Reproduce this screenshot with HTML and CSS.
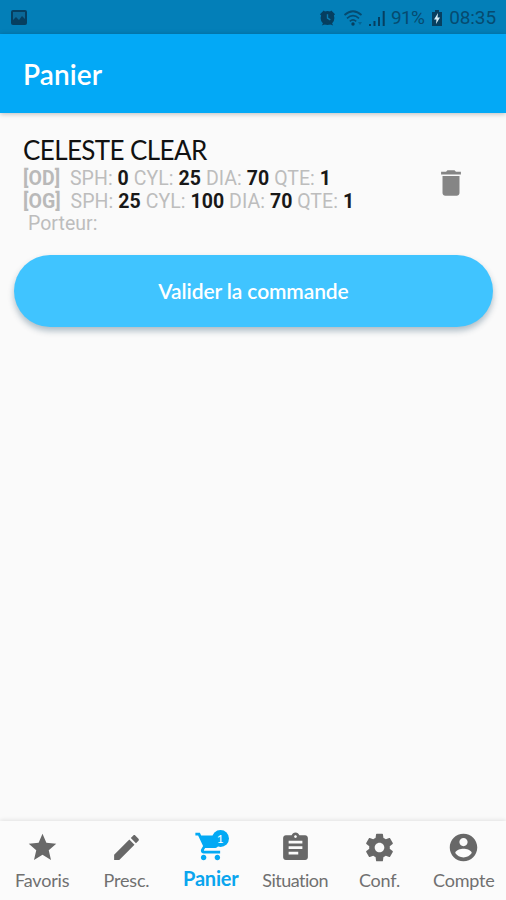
FILE: index.html
```html
<!DOCTYPE html>
<html lang="fr">

<head>
    <meta charset="UTF-8">
    <meta name="viewport" content="width=device-width, initial-scale=1.0">
    <title>Panier</title>
    <link rel="stylesheet" href="styles.css">
</head>

<body>
    <div class="status-bar">
        <svg class="status-picture" viewBox="0 0 18 17">
            <rect x="1" y="1" width="16" height="15" rx="2" fill="#063f60" />
            <path d="M3 3h12v7l-3-3-3 4-3-3-3 3z" fill="#0b6897" />
        </svg>
        <div class="status-right">
            <svg class="status-alarm" viewBox="0 0 18 18">
                <circle cx="9" cy="9" r="7.3" />
                <path d="M1 5l4-4 2 2-4 4zM17 5l-4-4-2 2 4 4zM3 17l2-4 3 2zM15 17l-2-4-3 2z" />
                <path d="M9 5v4l3 2" fill="none" stroke="#0b7db2" stroke-width="1.5" />
            </svg>
            <svg class="status-wifi" viewBox="0 0 22 18">
                <g fill="none" stroke="#064b70" stroke-width="1.7">
                    <path d="M1.5 6Q10 -1.5 18.5 6" />
                    <path d="M4 9.3Q10 4 16 9.3" />
                    <path d="M6.8 12.3Q10 9.5 13.2 12.3" />
                </g>
                <circle cx="10" cy="15" r="1.7" />
                <path d="M15 13l2 3 2-3z" opacity=".4" />
            </svg>
            <svg class="status-signal" viewBox="0 0 18 18">
                <path d="M1 15h2v2H1zM5.5 12h2v5h-2zM10 8h2v9h-2zM14.7 2h2v15h-2z" />
            </svg>
            <span class="battery-text">91%</span>
            <svg class="status-battery" viewBox="0 0 12 18">
                <path d="M4 1h4v2h3v14H1V3h3z" />
                <path d="M7 4L3 10.500h2.500L5 15l4-6.500H6.500z" fill="#d8eef7" />
            </svg>
            <span class="clock">08:35</span>
        </div>
    </div>

    <header class="app-bar">
        <h1>Panier</h1>
    </header>

    <main>
        <div class="item">
            <div class="item-info">
                <h2>CELESTE CLEAR</h2>
                <p class="eye-right"><b class="eye">[OD]</b>&nbsp; SPH: <b>0</b> CYL: <b>25</b> DIA: <b>70</b> QTE: <b>1</b></p>
                <p class="eye-left"><b class="eye">[OG]</b>&nbsp; SPH: <b>25</b> CYL: <b>100</b> DIA: <b>70</b> QTE: <b>1</b></p>
                <p class="wearer">&nbsp;Porteur:</p>
            </div>
            <button class="delete" aria-label="Supprimer">
                <svg viewBox="0 0 24 24">
                    <path d="M6 19c0 1.100.9 2 2 2h8c1.100 0 2-.9 2-2V7H6v12zM19 4h-3.500l-1-1h-5l-1 1H5v2h14V4z" />
                </svg>
            </button>
        </div>
        <button class="validate"><span>Valider la commande</span></button>
    </main>

    <nav class="tabs">
        <a class="tab favoris">
            <svg viewBox="0 0 24 24">
                <path d="M12 17.270L18.180 21l-1.640-7.030L22 9.240l-7.190-.61L12 2 9.190 8.630 2 9.240l5.460 4.730L5.820 21z" />
            </svg>
            <span>Favoris</span>
        </a>
        <a class="tab presc">
            <svg viewBox="0 0 24 24">
                <path d="M3 17.250V21h3.750L17.810 9.940l-3.750-3.750L3 17.250zM20.710 7.040c.39-.39.39-1.020 0-1.410l-2.340-2.340c-.39-.39-1.020-.39-1.410 0l-1.830 1.830 3.750 3.750 1.830-1.830z" />
            </svg>
            <span>Presc.</span>
        </a>
        <a class="tab panier active">
            <svg viewBox="0 0 24 24">
                <path d="M7 18c-1.100 0-1.990.9-1.990 2S5.900 22 7 22s2-.9 2-2-.9-2-2-2zM1 2v2h2l3.600 7.590-1.350 2.450c-.16.28-.25.61-.25.96 0 1.100.9 2 2 2h12v-2H7.420c-.14 0-.25-.11-.25-.25l.03-.12.9-1.630h7.450c.75 0 1.410-.41 1.750-1.030l3.580-6.490c.08-.14.12-.31.12-.48 0-.55-.45-1-1-1H5.210l-.94-2H1zm16 16c-1.100 0-1.990.9-1.990 2s.89 2 1.990 2 2-.9 2-2-.9-2-2-2z" />
            </svg>
            <i class="badge">1</i>
            <span>Panier</span>
        </a>
        <a class="tab situation">
            <svg viewBox="0 0 24 24">
                <path d="M19 3h-4.180C14.400 1.840 13.300 1 12 1c-1.300 0-2.400.84-2.820 2H5c-1.100 0-2 .9-2 2v14c0 1.100.9 2 2 2h14c1.100 0 2-.9 2-2V5c0-1.100-.9-2-2-2zm-7 0c.55 0 1 .45 1 1s-.45 1-1 1-1-.45-1-1 .45-1 1-1zm2 14H7v-2h7v2zm3-4H7v-2h10v2zm0-4H7V7h10v2z" />
            </svg>
            <span>Situation</span>
        </a>
        <a class="tab conf">
            <svg viewBox="0 0 24 24">
                <path d="M19.430 12.980c.04-.32.07-.64.07-.98s-.03-.66-.07-.98l2.110-1.650c.19-.15.24-.42.12-.64l-2-3.460c-.12-.22-.39-.3-.61-.22l-2.490 1c-.52-.4-1.080-.73-1.690-.98l-.38-2.650C14.460 2.180 14.250 2 14 2h-4c-.25 0-.46.18-.49.42l-.38 2.650c-.61.25-1.170.59-1.690.98l-2.490-1c-.23-.09-.49 0-.61.22l-2 3.460c-.13.22-.07.49.12.64l2.110 1.650c-.04.32-.07.65-.07.98s.03.66.07.98l-2.110 1.650c-.19.15-.24.42-.12.64l2 3.460c.12.22.39.3.61.22l2.490-1c.52.4 1.080.73 1.690.98l.38 2.650c.03.24.24.42.49.42h4c.25 0 .46-.18.49-.42l.38-2.650c.61-.25 1.170-.59 1.690-.98l2.490 1c.23.09.49 0 .61-.22l2-3.460c.12-.22.07-.49-.12-.64l-2.110-1.650zM12 15.500c-1.930 0-3.500-1.570-3.500-3.500s1.570-3.500 3.500-3.500 3.500 1.570 3.500 3.500-1.570 3.500-3.500 3.500z" />
            </svg>
            <span>Conf.</span>
        </a>
        <a class="tab compte">
            <svg viewBox="0 0 24 24">
                <path d="M12 2C6.480 2 2 6.480 2 12s4.480 10 10 10 10-4.480 10-10S17.520 2 12 2zm0 3c1.660 0 3 1.340 3 3s-1.340 3-3 3-3-1.340-3-3 1.340-3 3-3zm0 14.200c-2.500 0-4.710-1.280-6-3.220.03-1.990 4-3.080 6-3.080 1.990 0 5.970 1.090 6 3.080-1.290 1.940-3.500 3.220-6 3.220z" />
            </svg>
            <span>Compte</span>
        </a>
    </nav>
</body>

</html>
```
FILE: styles.css
```css
* {
    box-sizing: border-box;
}

body {
    margin: 0;
    height: 900px;
    display: flex;
    flex-direction: column;
    overflow: hidden;
    background-color: #fafafa;
    font-family: Lato, sans-serif;
    font-variant-ligatures: none;
}

h1,
h2,
p {
    margin: 0;
    font-weight: normal;
    white-space: nowrap;
}

/* android status bar */
.status-bar {
    height: 34px;
    padding: 1px 10px 0;
    display: flex;
    align-items: center;
    justify-content: space-between;
    background-color: #037fb8;
    color: #064b70;
    fill: #063f60;
    font-family: Roboto, sans-serif;
    font-size: 19px;
}

.status-picture {
    width: 18px;
    height: 17px;
}

.status-right {
    display: flex;
    align-items: center;
}

.status-alarm {
    width: 17px;
    height: 18px;
    margin-right: 7px;
}

.status-wifi {
    width: 22px;
    height: 18px;
    margin-right: 3px;
}

.status-signal {
    width: 18px;
    height: 18px;
    margin-right: 5px;
}

.battery-text {
    margin-right: 7px;
    letter-spacing: -0.7px;
}

.status-battery {
    width: 12px;
    height: 18px;
    margin-right: 6px;
}

.clock {
    letter-spacing: -0.1px;
}

.app-bar {
    height: 79px;
    padding-left: 23px;
    display: flex;
    align-items: center;
    background-color: #03a9f6;
    box-shadow: 0 1px 5px rgba(0, 0, 0, 0.25);
}

.app-bar h1 {
    color: white;
    font-size: 28px;
    font-weight: 600;
    letter-spacing: 0.1px;
}

main {
    flex: 1;
    padding: 20px 13px 0 14px;
}

.item {
    height: 122px;
    padding-left: 9px;
    display: flex;
    justify-content: space-between;
}

.item h2 {
    height: 35px;
    line-height: 35px;
    color: #111;
    font-size: 26px;
    letter-spacing: -0.6px;
}

.item p {
    height: 22.500px;
    line-height: 22.500px;
    color: #bdbdbd;
    font-family: Roboto, sans-serif;
    font-size: 19.500px;
    letter-spacing: 0.060px;
}

.item b {
    color: #181818;
    font-weight: 700;
}

.item .eye {
    color: #b9b9b9;
}

.delete {
    width: 34px;
    height: 34px;
    margin: 33px 25px 0 0;
    padding: 0;
    border: none;
    background: none;
}

.delete svg {
    display: block;
    fill: #858585;
}

.validate {
    display: block;
    width: 100%;
    height: 72px;
    padding-bottom: 3px;
    border: none;
    border-radius: 36px;
    background-color: #40c4ff;
    box-shadow: 0 4px 6px rgba(0, 50, 80, 0.3);
    color: white;
    font-family: Lato, sans-serif;
    font-size: 21px;
    font-weight: 600;
    letter-spacing: -0.1px;
}

/* bottom navigation */
.tabs {
    height: 79px;
    display: flex;
    background-color: #fbfbfb;
    box-shadow: 0 -1px 4px rgba(0, 0, 0, 0.1);
}

.tab {
    position: relative;
    flex: 1;
    min-width: 0;
    padding-top: 10px;
    display: flex;
    flex-direction: column;
    align-items: center;
    color: #707070;
    fill: #686868;
    font-size: 18px;
    letter-spacing: -0.2px;
    white-space: nowrap;
}

.tab svg {
    width: 33px;
    height: 33px;
}

.tab span {
    line-height: 32px;
}

.situation span {
    letter-spacing: -0.5px;
}

.active {
    padding-top: 9px;
    color: #0aa5ee;
    fill: #03a9f4;
    font-size: 20px;
    font-weight: 700;
}

.active span {
    line-height: 30px;
}

.badge {
    position: absolute;
    top: 9px;
    left: 43px;
    width: 17px;
    height: 17px;
    border-radius: 50%;
    background-color: #03a9f4;
    color: white;
    font-size: 12px;
    font-style: normal;
    font-weight: normal;
    line-height: 17px;
    text-align: center;
}
```
